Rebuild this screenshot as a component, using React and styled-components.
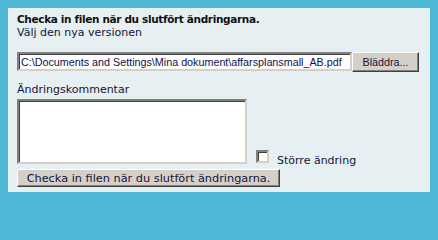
import React from 'react'
import styled, { createGlobalStyle } from 'styled-components'

const COLOR_FRAME = '#4DB9D7'
const COLOR_PANEL = '#E6EFF1'
const COLOR_TEXT = '#14143A'
const COLOR_FACE = '#D4D0C8'
const COLOR_DARK = '#404040'
const COLOR_SHADOW = '#808080'
const FONT_VERDANA = '"DejaVu Sans", Verdana, sans-serif'
const FONT_ARIAL = '"Liberation Sans", Arial, sans-serif'

const GlobalStyle = createGlobalStyle`
  html, body { margin: 0; padding: 0; background: ${COLOR_FRAME}; }
  html, body { width: 438px; height: 201px; overflow: hidden; }
`

const Panel = styled.div`
  box-sizing: border-box;
  margin: 8px;
  width: 422px;
  height: 184px;
  padding: 5px 9px 0;
  background: ${COLOR_PANEL};
  font-family: ${FONT_VERDANA};
  font-size: 11px;
  line-height: 13px;
  color: ${COLOR_TEXT};
`

const Title = styled.div`
  font-weight: bold;
  font-size: 10.5px;
  letter-spacing: -0.35px;
  color: #111;
`

const Hint = styled.div``

const FileRow = styled.div`
  display: flex;
  align-items: flex-start;
  margin-top: 13px;
`

const inset = `
  box-sizing: border-box;
  border-style: solid;
  border-width: 2px;
  border-color: ${COLOR_SHADOW} ${COLOR_FACE} ${COLOR_FACE} ${COLOR_SHADOW};
  box-shadow: inset 1px 1px 0 ${COLOR_DARK};
  background: #fff;
  outline: none;
`

const FileField = styled.input`
  ${inset}
  width: 335px;
  height: 19px;
  margin: 0;
  padding: 0 2px;
  font-family: ${FONT_ARIAL};
  font-size: 10.75px;
  color: #10104a;
`

const Button = styled.button`
  box-sizing: border-box;
  margin: 0;
  padding: 0;
  width: ${p => p.$width}px;
  height: ${p => p.$height}px;
  background: ${COLOR_FACE};
  border-style: solid;
  border-width: 1px;
  border-color: #fff ${COLOR_DARK} ${COLOR_DARK} #fff;
  box-shadow: inset -1px -1px 0 ${COLOR_SHADOW};
  font-family: ${p => p.$verdana ? FONT_VERDANA : FONT_ARIAL};
  font-size: ${p => p.$verdana ? '11.3px' : '10.75px'};
  color: ${COLOR_TEXT};
  text-align: center;
  white-space: nowrap;
`

const Label = styled.div`
  margin-top: 11px;
`

const CommentRow = styled.div`
  display: flex;
  align-items: flex-end;
  margin-top: 3px;
`

const Comment = styled.textarea`
  ${inset}
  display: block;
  width: 230px;
  height: 65px;
  margin: 0;
  padding: 2px;
  resize: none;
`

const Check = styled.input`
  appearance: none;
  ${inset}
  width: 13px;
  height: 13px;
  margin: 0 0 1px 9px;
`

const CheckLabel = styled.span`
  margin: 0 0 -3px 8px;
  line-height: 13px;
`

const SubmitRow = styled.div`
  margin-top: 5px;
`

export default function App () {
  return <>
    <GlobalStyle />
    <Panel>
      <Title>Checka in filen när du slutfört ändringarna.</Title>
      <Hint>Välj den nya versionen</Hint>
      <FileRow>
        <FileField type="text" readOnly value="C:\Documents and Settings\Mina dokument\affarsplansmall_AB.pdf" />
        <Button $width={67} $height={20}>Bläddra...</Button>
      </FileRow>
      <Label>Ändringskommentar</Label>
      <CommentRow>
        <Comment />
        <Check type="checkbox" />
        <CheckLabel>Större ändring</CheckLabel>
      </CommentRow>
      <SubmitRow>
        <Button $width={263} $height={18} $verdana>Checka in filen när du slutfört ändringarna.</Button>
      </SubmitRow>
    </Panel>
  </>
}
